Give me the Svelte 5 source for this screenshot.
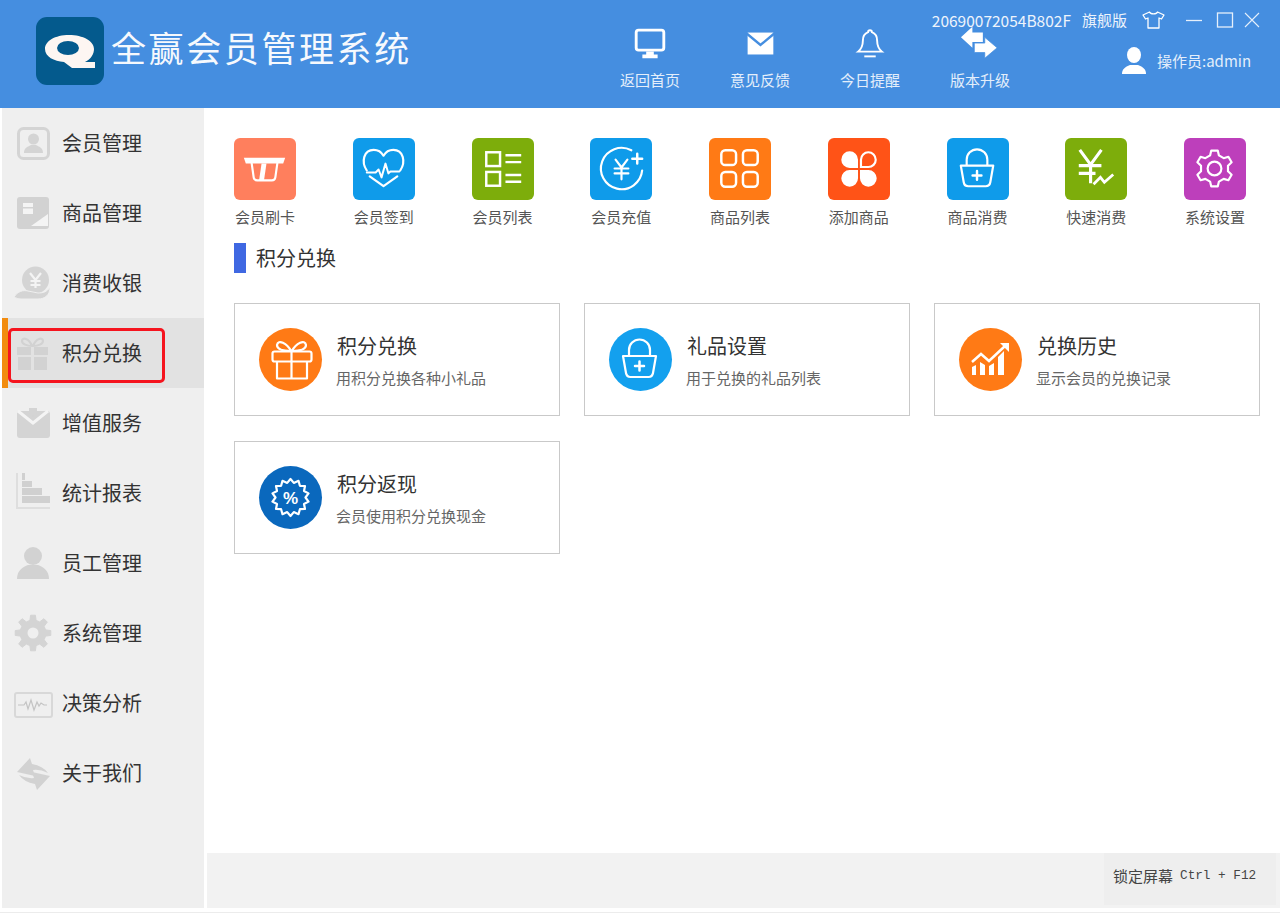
<script>
  function star(cx, cy, ro, ri, n) {
    let d = '';
    for (let i = 0; i < n * 2; i++) {
      const r = i % 2 ? ri : ro;
      const a = (Math.PI * i) / n - Math.PI / 2;
      d += (i ? 'L' : 'M') + (cx + r * Math.cos(a)).toFixed(1) + ' ' + (cy + r * Math.sin(a)).toFixed(1);
    }
    return d + 'Z';
  }
  function gear(cx, cy, ro, ri, n) {
    let d = '';
    const t = Math.PI / n;
    for (let i = 0; i < n; i++) {
      const a = (2 * Math.PI * i) / n - Math.PI / 2;
      const pts = [[ri, a - t * 0.62], [ro, a - t * 0.34], [ro, a + t * 0.34], [ri, a + t * 0.62]];
      for (const [r, b] of pts) d += (d ? 'L' : 'M') + (cx + r * Math.cos(b)).toFixed(1) + ' ' + (cy + r * Math.sin(b)).toFixed(1);
    }
    return d + 'Z';
  }

  const nav = [
    { label: '返回首页', svg: '<rect x="6.500" y="5.500" width="29" height="21" rx="2.500" fill="none" stroke="#fff" stroke-width="3"/><path d="M17 28h8v3h4v4H13v-4h4z" fill="#fff"/>' },
    { label: '意见反馈', svg: '<rect x="8" y="8" width="27" height="23" fill="#fff"/><path d="M7 9l14.500 12L36 9" fill="none" stroke="#458ee0" stroke-width="2.500"/>' },
    { label: '今日提醒', svg: '<path d="M21 5.500c1.500 0 2 1 2 2 4 1.500 5.500 5 5.500 9 0 6 2 9 5 11.500H8.500c3-2.500 5-5.500 5-11.500 0-4 1.500-7.500 5.500-9 0-1 .5-2 2-2z" fill="none" stroke="#fff" stroke-width="2"/><path d="M15 33h12" stroke="#fff" stroke-width="2"/>' },
    { label: '版本升级', svg: '<path d="M1 13L13 2v6h11v10H13v6z" fill="#fff"/><path d="M39 24L26 13v6H15v10h11v6z" fill="#fff" stroke="#458ee0" stroke-width=".8"/>' }
  ];

  const arrow = 'M4 19L17 5l2 6q11 2 16 9q-8-4-15-3l2 6z';
  const menu = [
    { label: '会员管理', svg: '<rect x="5.500" y="5.500" width="30" height="30" rx="5" fill="none" stroke="#d4d4d4" stroke-width="3"/><circle cx="20.500" cy="16" r="5.500" fill="#d4d4d4"/><path d="M11 30c0-5 3-6 7-8h5c4 2 7 3 7 8z" fill="#d4d4d4"/>' },
    { label: '商品管理', svg: '<rect x="4" y="4" width="32" height="32" rx="3" fill="#d2d2d2"/><rect x="10" y="10" width="10" height="11" fill="#f4f4f4"/><rect x="10" y="14" width="10" height="1.500" fill="#d2d2d2"/><path d="M35 21v12H18z" fill="#f4f4f4"/>' },
    { label: '消费收银', svg: '<circle cx="22.500" cy="17" r="13.500" fill="#d4d4d4"/><path d="M1 34c4-6 9-7 14-6l10 2c5 0 9-1 12-6 0 8-5 12-12 12H8c-3 0-5-1-7-2z" fill="#d4d4d4" stroke="#efefef" stroke-width="1"/><path d="M17 10l5.500 7 5.500-7M22.500 17v8M17.500 18h10M17.500 22h10" fill="none" stroke="#f4f4f4" stroke-width="2.200"/>' },
    { label: '积分兑换', svg: '<rect x="4" y="14" width="31" height="8" fill="#d2d2d2"/><rect x="5" y="24" width="13" height="13" fill="#d2d2d2"/><rect x="21" y="24" width="13" height="13" fill="#d2d2d2"/><rect x="18" y="14" width="3" height="8" fill="#e2e2e2"/><path d="M19 13C16 5 9 4 9 8c0 3 5 5 10 5zM20 13c3-8 10-9 10-5 0 3-5 5-10 5z" fill="none" stroke="#d2d2d2" stroke-width="2.200"/>' },
    { label: '增值服务', svg: '<rect x="4" y="8" width="33" height="27" rx="3" fill="#d4d4d4"/><path d="M5 8l15 12L35 8" fill="none" stroke="#f4f4f4" stroke-width="3"/><path d="M16 5h8v4l-4 5-4-5z" fill="#d4d4d4"/>' },
    { label: '统计报表', svg: '<path d="M4 0v35h33" fill="none" stroke="#dedede" stroke-width="2"/><rect x="9" y="0" width="3" height="7" fill="#d0d0d0"/><rect x="9" y="8" width="10" height="6" fill="#d0d0d0"/><rect x="9" y="15" width="20" height="7" fill="#d0d0d0"/><rect x="9" y="23" width="28" height="7" fill="#d0d0d0"/>' },
    { label: '员工管理', svg: '<circle cx="20" cy="13" r="9" fill="#d2d2d2"/><path d="M4 36c0-9 6-12 11-14h10c5 2 11 5 11 14z" fill="#d2d2d2"/>' },
    { label: '系统管理', svg: `<path d="${gear(20, 20, 18, 13, 8)}" fill="#d4d4d4" stroke="#d4d4d4" stroke-width="1" stroke-linejoin="round"/><circle cx="20" cy="20" r="5.500" fill="#efefef"/>` },
    { label: '决策分析', svg: '<rect x="2" y="10" width="37" height="24" rx="2" fill="none" stroke="#d8d8d8" stroke-width="2"/><path d="M5 22h6l2-3 2 7 3-9 3 10 3-8 2 4 2-3 3 2h3" fill="none" stroke="#c4c4c4" stroke-width="1.200"/>' },
    { label: '关于我们', svg: `<path d="${arrow}" fill="#d2d2d2"/><path d="${arrow}" fill="#d2d2d2" transform="rotate(180 20.500 21)"/>` }
  ];

  const s = 'fill="none" stroke="#fff" stroke-width="2.200" stroke-linecap="round" stroke-linejoin="round"';
  const bag = `<g ${s}><path d="M14 28h33l-3 17c-.5 3-2 4-4.500 4H21.500c-2.500 0-4-1-4.500-4zM20 27v-5a10.500 10.500 0 0 1 21 0v5"/><path d="M30.500 33.500v9M26 38h9" stroke-width="2.500"/></g>`;

  const quick = [
    { label: '会员刷卡', c: '#ff7f5d', svg: `<path d="M10 20h42l-2 6H12z" fill="#fff"/><path d="M18 26l2 14c.3 2 1.500 3 3.500 3h15c2 0 3.200-1 3.500-3l2-14" ${s}/><path d="M28 26h5l-2.500 17h-5z" fill="#fff"/>` },
    { label: '会员签到', c: '#0f9bea', svg: `<g ${s}><path d="M14 33C8 24 11 12 21 12c5 0 8 2.500 10 6 2-3.500 5-6 10-6 10 0 13 12 7 21M17 39l14 10 14-10"/><path d="M14 35h9l3-3 3 8 4-14 3 10 2-2h9" stroke-width="2"/></g>` },
    { label: '会员列表', c: '#7dad0b', svg: `<g fill="none" stroke="#fff" stroke-width="2.500"><rect x="14.500" y="14.500" width="14" height="14"/><rect x="14.500" y="34.500" width="14" height="14"/><path d="M34 17.500h16M34 24.500h16M34 37.500h16M34 44.500h16"/></g>` },
    { label: '会员充值', c: '#0f9bea', svg: `<g ${s}><path d="M42 12.500A21 21 0 1 0 53 33"/><path d="M48 16v10M43 21h10" stroke-width="2.500"/><path d="M26 22l6 8 6-8M32 30v12M25 31h14M25 36h14"/></g>` },
    { label: '商品列表', c: '#ff7a15', svg: `<g fill="none" stroke="#fff" stroke-width="2.500"><rect x="12.500" y="12.500" width="15" height="15" rx="4"/><rect x="34.500" y="12.500" width="15" height="15" rx="4"/><rect x="12.500" y="34.500" width="15" height="15" rx="4"/><rect x="34.500" y="34.500" width="15" height="15" rx="4"/></g>` },
    { label: '添加商品', c: '#ff5317', svg: `<g fill="#fff"><path d="M30.500 30.500H22a8.500 8.500 0 1 1 8.500-8.500zM30.500 32.500H22a8.500 8.500 0 1 0 8.500 8.500zM32.500 32.500H41a8.500 8.500 0 1 1-8.500 8.500z"/></g><path d="M33.500 29.500V22a7.500 7.500 0 1 1 7.500 7.500z" fill="none" stroke="#fff" stroke-width="2.200"/>` },
    { label: '商品消费', c: '#0f9bea', svg: bag },
    { label: '快速消费', c: '#7dad0b', svg: `<g fill="none" stroke="#fff" stroke-width="3.200"><path d="M15 12l11 15 11-15M26 27v19M14 28h23M14 36h17"/><path d="M29 47l7-7 4 5 9-8" stroke-width="2.800"/></g>` },
    { label: '系统设置', c: '#bd3fbb', svg: `<g ${s}><path d="${gear(31, 31, 18.5, 14, 6)}"/><circle cx="31" cy="31" r="7"/></g>` }
  ];

  const cards = [
    { title: '积分兑换', desc: '用积分兑换各种小礼品', c: '#ff7a15', svg: `<g ${s}><rect x="13.500" y="23.500" width="39" height="10" rx="2"/><path d="M18 34v16.500h30V34M32.500 24v26"/><path d="M32 23c-4-8-13-12-14-6 0 5 8 6 14 6zM33 23c4-8 13-12 14-6 0 5-8 6-14 6z"/></g>` },
    { title: '礼品设置', desc: '用于兑换的礼品列表', c: '#13a0ee', svg: bag },
    { title: '兑换历史', desc: '显示会员的兑换记录', c: '#ff7a15', svg: `<g fill="#fff"><path d="M13 39l4-2v10h-4zM21 34l5 3v10h-5zM30 38l5-3v12h-5zM39 29l6-6v24h-6z"/></g><path d="M13 34l9-8 8 7 16-15" fill="none" stroke="#fff" stroke-width="2.500"/><path d="M41 15h9v9z" fill="#fff"/>` },
    { title: '积分返现', desc: '会员使用积分兑换现金', c: '#0a68bd', svg: `<path d="${star(31.5, 31.5, 18.5, 15, 14)}" fill="none" stroke="#fff" stroke-width="2.200" stroke-linejoin="round"/><text x="31.500" y="37.500" text-anchor="middle" font-size="17" font-weight="700" font-family="Liberation Sans" fill="#fff">%</text>` }
  ];
</script>

<div class="page">
  <header class="top">
    <div class="logo">
      <svg width="68" height="68" viewBox="0 0 68 68"><rect width="68" height="68" rx="11" fill="#045a8d"/><path d="M33 18C19 18 9 24 9 32c0 8 9 12 19 13l8 6h23v-6H49c6-3 9-8 9-13 0-8-11-14-25-14z" fill="#fdf6f2"/><ellipse cx="32" cy="31" rx="11" ry="7" fill="#045a8d"/></svg>
    </div>
    <h1 class="title">全赢会员管理系统</h1>
    <nav class="nav">
      {#each nav as n}
        <div class="nav-item">
          <svg width="40" height="40" viewBox="0 0 42 40">{@html n.svg}</svg>
          <span>{n.label}</span>
        </div>
      {/each}
    </nav>
    <div class="user">
      <svg width="24" height="27" viewBox="0 0 24 27"><ellipse cx="12" cy="8" rx="7" ry="8" fill="#fff"/><path d="M0 27c0-5 3-7 8-9h8c5 2 8 4 8 9z" fill="#fff"/></svg>
      <span>操作员:admin</span>
    </div>
    <div class="winbar">
      <span class="serial">20690072054B802F</span>
      <span class="edition">旗舰版</span>
      <svg class="shirt" width="23" height="18" viewBox="0 0 23 18"><path d="M7.500 1L1 4l2.500 4 2.500-1v10h11V7l2.500 1L22 4l-6.500-3c-1 2.500-7 2.500-8 0z" fill="none" stroke="#fff" stroke-width="1.300" stroke-linejoin="round"/></svg>
      <svg class="ctrls" width="74" height="16" viewBox="0 0 74 16"><path d="M0 8.500h16" stroke="#e6f0fb" stroke-width="1.300"/><rect x="31.500" y="1" width="15" height="14" fill="none" stroke="#e6f0fb" stroke-width="1.300"/><path d="M59 1l14 14M73 1L59 15" stroke="#e6f0fb" stroke-width="1.100"/></svg>
    </div>
  </header>

  <div class="body">
    <aside class="side">
      {#each menu as m, i}
        <div class="row" class:active={i === 3}>
          <svg width="40" height="40" viewBox="0 0 40 40">{@html m.svg}</svg>
          <span>{m.label}</span>
        </div>
      {/each}
      <div class="mark"></div>
    </aside>

    <div class="right">
      <main class="main">
        <div class="quick">
          {#each quick as q}
            <div class="q">
              <div class="tile" style="background:{q.c}">
                <svg width="62" height="62" viewBox="0 0 63 63">{@html q.svg}</svg>
              </div>
              <span>{q.label}</span>
            </div>
          {/each}
        </div>
        <div class="heading"><i></i><span>积分兑换</span></div>
        <div class="cards">
          {#each cards as c}
            <div class="card">
              <div class="circle" style="background:{c.c}">
                <svg width="63" height="63" viewBox="0 0 63 63">{@html c.svg}</svg>
              </div>
              <div class="txt">
                <strong>{c.title}</strong>
                <small>{c.desc}</small>
              </div>
            </div>
          {/each}
        </div>
      </main>
      <footer class="foot">
        <div class="lock"><span class="cn">锁定屏幕</span> <span class="key">Ctrl + F12</span></div>
      </footer>
    </div>
  </div>
</div>

<style>
  :global(body) { margin: 0; background: #fff; }
  .page {
    width: 1280px;
    height: 913px;
    box-sizing: border-box;
    border-bottom: 1px solid #ececec;
    display: flex;
    flex-direction: column;
    overflow: hidden;
    font-family: "Noto Sans CJK SC", "Liberation Sans", sans-serif;
  }
  .top {
    position: relative;
    height: 108px;
    flex: none;
    background: #458ee0;
    display: flex;
    align-items: flex-start;
    color: #fff;
    padding-left: 36px;
    box-sizing: border-box;
  }
  .logo { margin-top: 17px; height: 68px; margin-right: 7px; }
  .title {
    margin: 23px 0 0;
    width: 412px;
    font-size: 35px;
    line-height: 48px;
    font-weight: 400;
    letter-spacing: 2.600px;
    white-space: nowrap;
    color: #f6f9fd;
  }
  .nav { display: flex; margin-left: 72px; }
  .nav-item {
    width: 110px;
    padding-top: 24px;
    display: flex;
    flex-direction: column;
    align-items: center;
    font-size: 15px;
    color: #e4eefb;
  }
  .nav-item span { margin-top: 6px; line-height: 20px; }
  .user {
    display: flex;
    align-items: center;
    gap: 11px;
    margin-left: 87px;
    margin-top: 47px;
    font-size: 15px;
    color: #e4eefb;
    white-space: nowrap;
  }
  .winbar {
    position: absolute;
    top: 10px;
    right: 20px;
    display: flex;
    align-items: center;
    line-height: 20px;
    color: #eef4fc;
    white-space: nowrap;
  }
  .serial { font-size: 15.500px; }
  .edition { margin-left: 11px; font-size: 15px; }
  .shirt { margin-left: 15px; }
  .ctrls { margin-left: 21px; }

  .body { flex: 1; display: flex; min-height: 0; padding-bottom: 4px; }
  .side {
    position: relative;
    margin-left: 2px;
    width: 202px;
    flex: none;
    background: #efefef;
  }
  .row {
    height: 70px;
    display: flex;
    align-items: center;
    padding-left: 11px;
    font-size: 20px;
    color: #333;
    box-sizing: border-box;
  }
  .row span { margin-left: 9px; line-height: 26px; }
  .row.active {
    background: #e2e2e2;
    border-left: 6px solid #f28c0f;
    padding-left: 5px;
  }
  .mark {
    position: absolute;
    left: 6px;
    top: 220px;
    width: 157px;
    height: 55px;
    box-sizing: border-box;
    border: 3px solid #f5141e;
    border-radius: 5px;
  }

  .right { flex: 1; display: flex; flex-direction: column; min-width: 0; padding-left: 3px; }
  .main { flex: 1; padding: 30px 20px 0 27px; min-height: 0; }
  .quick { display: flex; justify-content: space-between; width: 1012px; }
  .q { width: 62px; display: flex; flex-direction: column; align-items: center; }
  .tile { width: 62px; height: 62px; border-radius: 6px; }
  .tile svg, .circle svg { display: block; }
  .q span { margin-top: 7px; font-size: 15px; line-height: 20px; color: #555; white-space: nowrap; }
  .heading { display: flex; align-items: center; height: 30px; margin-top: 16px; }
  .heading i { width: 12px; height: 30px; background: #3f68e2; }
  .heading span { margin-left: 10px; margin-bottom: 2px; font-size: 20px; color: #333; }
  .cards {
    margin-top: 30px;
    display: grid;
    grid-template-columns: repeat(3, 326px);
    column-gap: 24px;
    row-gap: 25px;
  }
  .card {
    height: 113px;
    box-sizing: border-box;
    border: 1px solid #c9c9c9;
    padding-left: 24px;
    display: flex;
    align-items: center;
  }
  .circle { width: 63px; height: 63px; border-radius: 50%; flex: none; }
  .txt { margin-left: 14px; display: flex; flex-direction: column; }
  .txt strong { font-weight: 400; font-size: 20px; line-height: 28px; color: #333; margin-left: 1px; }
  .txt small { font-size: 15px; line-height: 20px; margin-top: 8px; color: #666; }

  .foot {
    height: 55px;
    flex: none;
    background: #f2f2f2;
    display: flex;
    justify-content: flex-end;
  }
  .lock {
    width: 172px;
    margin-right: 4px;
    box-sizing: border-box;
    padding: 0 0 7px 9px;
    background: #eee;
    color: #444;
    white-space: nowrap;
    display: flex;
    align-items: center;
    height: 52px;
    gap: 7px;
  }
  .cn { font-size: 15px; }
  .key { font-family: "Liberation Mono", monospace; font-size: 12.700px; }
</style>
